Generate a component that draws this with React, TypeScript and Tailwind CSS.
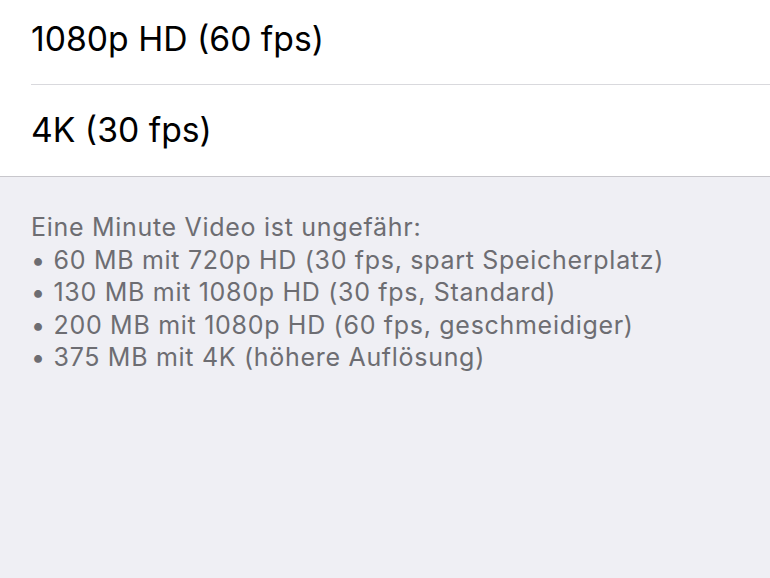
const rows = ['1080p HD (60 fps)', '4K (30 fps)'];

const notes = [
  'Eine Minute Video ist ungefähr:',
  '• 60 MB mit 720p HD (30 fps, spart Speicherplatz)',
  '• 130 MB mit 1080p HD (30 fps, Standard)',
  '• 200 MB mit 1080p HD (60 fps, geschmeidiger)',
  '• 375 MB mit 4K (höhere Auflösung)',
];

export default function App() {
  return (
    <div className="w-[770px] h-[578px] bg-[#efeff4] overflow-hidden font-['Inter','Liberation_Sans',sans-serif]">
      {/* Options list */}
      <div className="bg-white border-b border-[#c8c7cc]">
        {rows.map((label, i) => (
          <div key={label} className="pl-[31px]">
            <div
              className={`flex items-center text-[33.7px] text-black ${
                i < rows.length - 1 ? 'h-[85px] pb-[5px] border-b border-[#d9d9dd]' : 'h-[91px]'
              }`}
            >
              {label}
            </div>
          </div>
        ))}
      </div>

      {/* Footer note */}
      <div className="pl-[31px] pt-[34px] text-[25px] leading-[32.5px] tracking-[0.7px] text-[#6d6d72]">
        {notes.map((line) => (
          <p key={line}>{line}</p>
        ))}
      </div>
    </div>
  );
}
